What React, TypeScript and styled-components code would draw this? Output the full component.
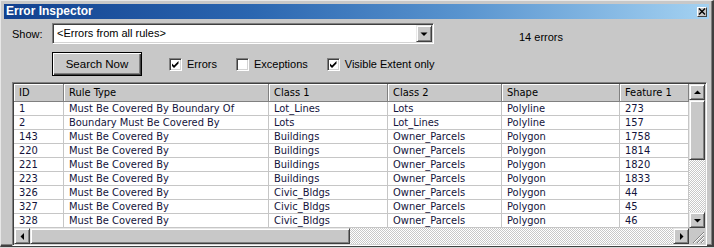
import styled, { createGlobalStyle } from 'styled-components';

type ErrorRow = {
  id: string,
  rule: string,
  class1: string,
  class2: string,
  shape: string,
  feature: string,
};

const rows: ErrorRow[] = [
  { id: '1', rule: 'Must Be Covered By Boundary Of', class1: 'Lot_Lines', class2: 'Lots', shape: 'Polyline', feature: '273' },
  { id: '2', rule: 'Boundary Must Be Covered By', class1: 'Lots', class2: 'Lot_Lines', shape: 'Polyline', feature: '157' },
  { id: '143', rule: 'Must Be Covered By', class1: 'Buildings', class2: 'Owner_Parcels', shape: 'Polygon', feature: '1758' },
  { id: '220', rule: 'Must Be Covered By', class1: 'Buildings', class2: 'Owner_Parcels', shape: 'Polygon', feature: '1814' },
  { id: '221', rule: 'Must Be Covered By', class1: 'Buildings', class2: 'Owner_Parcels', shape: 'Polygon', feature: '1820' },
  { id: '223', rule: 'Must Be Covered By', class1: 'Buildings', class2: 'Owner_Parcels', shape: 'Polygon', feature: '1833' },
  { id: '326', rule: 'Must Be Covered By', class1: 'Civic_Bldgs', class2: 'Owner_Parcels', shape: 'Polygon', feature: '44' },
  { id: '327', rule: 'Must Be Covered By', class1: 'Civic_Bldgs', class2: 'Owner_Parcels', shape: 'Polygon', feature: '45' },
  { id: '328', rule: 'Must Be Covered By', class1: 'Civic_Bldgs', class2: 'Owner_Parcels', shape: 'Polygon', feature: '46' },
];

const columns = ['ID', 'Rule Type', 'Class 1', 'Class 2', 'Shape', 'Feature 1'];
const COLUMN_TEMPLATE = '50px 205px 119px 114px 118px 1fr';

const checks = [
  { label: 'Errors', checked: true },
  { label: 'Exceptions', checked: false },
  { label: 'Visible Extent only', checked: true },
];

type Dir = 'up' | 'down' | 'left' | 'right';

const arrowPoints: Record<Dir, string> = {
  up: '4,9 11,9 7.5,5.5',
  down: '4,6 11,6 7.5,9.5',
  left: '9,4 9,11 5.5,7.5',
  right: '6,4 6,11 9.5,7.5',
};

const ArrowButton = ({ dir }: { dir: Dir }) => (
  <RaisedButton>
    <svg width="14" height="14" viewBox="0 0 14 14">
      <polygon points={arrowPoints[dir]} fill="#000" />
    </svg>
  </RaisedButton>
);

const CheckMark = () => (
  <svg width="9" height="9" viewBox="0 0 9 9">
    <path d="M1 3.5 L3 5.5 L7.5 1 L7.5 3.5 L3 8 L1 6 Z" fill="#000" />
  </svg>
);

const App = () => (
  <>
    <GlobalStyle />
    <Window>
      <TitleBar>
        <Title>Error Inspector</Title>
        <CloseButton>
          <svg width="8" height="7" viewBox="0 0 8 7">
            <path d="M1 0.5 L7 6.5 M7 0.5 L1 6.5" stroke="#000" strokeWidth="1.4" />
          </svg>
        </CloseButton>
      </TitleBar>

      <Body>
        <TopRow>
          <FieldLabel>Show:</FieldLabel>
          <Combo>
            <ComboText>&lt;Errors from all rules&gt;</ComboText>
            <DropButton>
              <svg width="14" height="14" viewBox="0 0 14 14">
                <polygon points="3.5,5.5 10.5,5.5 7,9" fill="#000" />
              </svg>
            </DropButton>
          </Combo>
          <Count>14 errors</Count>
        </TopRow>

        <ActionRow>
          <PushButton>Search Now</PushButton>
          <CheckGroup>
            {checks.map(({ label, checked }) => (
              <CheckItem key={label}>
                <CheckBox>{checked && <CheckMark />}</CheckBox>
                {label}
              </CheckItem>
            ))}
          </CheckGroup>
        </ActionRow>

        <Panel>
          <GridArea>
            <HeaderRow>
              {columns.map(col => (
                <HeaderCell key={col}>{col}</HeaderCell>
              ))}
            </HeaderRow>
            {rows.map(row => (
              <DataRow key={row.id}>
                <Cell>{row.id}</Cell>
                <Cell>{row.rule}</Cell>
                <Cell>{row.class1}</Cell>
                <Cell>{row.class2}</Cell>
                <Cell>{row.shape}</Cell>
                <Cell>{row.feature}</Cell>
              </DataRow>
            ))}
          </GridArea>

          <VScroll>
            <ArrowButton dir="up" />
            <VThumb />
            <Track />
            <ArrowButton dir="down" />
          </VScroll>

          <HScroll>
            <ArrowButton dir="left" />
            <HThumb />
            <Track />
            <ArrowButton dir="right" />
          </HScroll>

          <SizeGrip>
            <svg width="16" height="16" viewBox="0 0 16 16">
              <path d="M15 4 L4 15 M15 8 L8 15 M15 12 L12 15" stroke="#808080" strokeWidth="1" />
              <path d="M15 5 L5 15 M15 9 L9 15 M15 13 L13 15" stroke="#ffffff" strokeWidth="1" />
            </svg>
          </SizeGrip>
        </Panel>
      </Body>
    </Window>
  </>
);

export default App;

const GlobalStyle = createGlobalStyle`
  html, body {
    margin: 0;
    padding: 0;
    background: #d8d8d8;
  }
  * {
    box-sizing: border-box;
  }
`;

const Window = styled.div`
  width: 714px;
  height: 247px;
  display: flex;
  flex-direction: column;
  padding: 3px 3px 0 3px;
  background: #c8c8c8;
  border-top: 1px solid #e8e8e8;
  border-left: 1px solid #e8e8e8;
  border-right: 2px solid #404040;
  border-bottom: 2px solid #404040;
  box-shadow: inset -1px -1px #808080;
  font-family: 'Liberation Sans', Arial, sans-serif;
  font-size: 11px;
  color: #000;
`;

const TitleBar = styled.div`
  height: 15px;
  flex: none;
  display: flex;
  align-items: center;
  justify-content: space-between;
  padding: 0 2px 0 2px;
  background: linear-gradient(90deg, #12418f 0%, #2b66b0 35%, #5994cf 65%, #a4d2f2 100%);
`;

const Title = styled.span`
  color: #fff;
  font-weight: bold;
  font-size: 12px;
  line-height: 15px;
`;

const CloseButton = styled.div`
  width: 10px;
  height: 10px;
  display: flex;
  align-items: center;
  justify-content: center;
  background: #c8c8c8;
  border: 1px solid;
  border-color: #fff #404040 #404040 #fff;
`;

const Body = styled.div`
  flex: 1;
  display: flex;
  flex-direction: column;
  padding: 4px 0 0 8px;
`;

const TopRow = styled.div`
  display: flex;
  align-items: center;
  height: 21px;
`;

const FieldLabel = styled.span`
  width: 40px;
`;

const Combo = styled.div`
  width: 382px;
  height: 21px;
  display: flex;
  align-items: center;
  justify-content: space-between;
  background: #fff;
  border: 1px solid;
  border-color: #808080 #fff #fff #808080;
  box-shadow: inset 1px 1px #404040, inset -1px -1px #d4d4d4;
  padding: 1px 1px 1px 4px;
`;

const ComboText = styled.span`
  line-height: 17px;
`;

const DropButton = styled.div`
  width: 16px;
  height: 17px;
  display: flex;
  align-items: center;
  justify-content: center;
  background: #c8c8c8;
  border: 1px solid;
  border-color: #e8e8e8 #404040 #404040 #e8e8e8;
  box-shadow: inset 1px 1px #fff, inset -1px -1px #808080;
`;

const Count = styled.span`
  margin-left: 85px;
  align-self: flex-end;
  line-height: 14px;
`;

const ActionRow = styled.div`
  display: flex;
  align-items: center;
  margin: 8px 0 0 40px;
`;

const PushButton = styled.div`
  width: 90px;
  height: 24px;
  display: flex;
  align-items: center;
  justify-content: center;
  background: #c8c8c8;
  border: 1px solid #000;
  box-shadow: inset 1px 1px #fff, inset -1px -1px #404040, inset -2px -2px #808080;
  font-size: 11.5px;
`;

const CheckGroup = styled.div`
  display: flex;
  align-items: center;
  gap: 19px;
  margin-left: 27px;
`;

const CheckItem = styled.label`
  display: flex;
  align-items: center;
  gap: 5px;
`;

const CheckBox = styled.span`
  width: 13px;
  height: 13px;
  display: flex;
  align-items: center;
  justify-content: center;
  background: #fff;
  border: 1px solid;
  border-color: #808080 #fff #fff #808080;
  box-shadow: inset 1px 1px #404040, inset -1px -1px #d4d4d4;
`;

const Panel = styled.div`
  flex: 1;
  margin: 6px 2px 2px 0;
  display: grid;
  grid-template-columns: 1fr 16px;
  grid-template-rows: 1fr 16px;
  border: 1px solid;
  border-color: #808080 #fff #fff #808080;
  box-shadow: inset 1px 1px #404040, inset -1px -1px #d4d4d4;
  padding: 1px;
  overflow: hidden;
`;

const GridArea = styled.div`
  background: #fff;
  overflow: hidden;
  font-family: 'DejaVu Sans Condensed', 'DejaVu Sans', 'Liberation Sans', sans-serif;
  font-stretch: condensed;
  font-size: 11px;
  color: #14143c;
`;

const HeaderRow = styled.div`
  display: grid;
  grid-template-columns: ${COLUMN_TEMPLATE};
  height: 18px;
  background: #c8c8c8;
`;

const HeaderCell = styled.div`
  padding-left: 5px;
  line-height: 17px;
  color: #000;
  border-right: 1px solid #808080;
  border-bottom: 1px solid #808080;
  box-shadow: inset 1px 1px #fff;
  white-space: nowrap;
  overflow: hidden;
`;

const DataRow = styled.div`
  display: grid;
  grid-template-columns: ${COLUMN_TEMPLATE};
  height: 14px;
`;

const Cell = styled.div`
  padding-left: 5px;
  line-height: 14px;
  border-right: 1px solid #c6c6c6;
  border-bottom: 1px solid #c6c6c6;
  white-space: nowrap;
  overflow: hidden;
`;

const RaisedButton = styled.div`
  width: 16px;
  height: 16px;
  flex: none;
  display: flex;
  align-items: center;
  justify-content: center;
  background: #c8c8c8;
  border: 1px solid;
  border-color: #e8e8e8 #404040 #404040 #e8e8e8;
  box-shadow: inset 1px 1px #fff, inset -1px -1px #808080;
`;

const VScroll = styled.div`
  display: flex;
  flex-direction: column;
`;

const HScroll = styled.div`
  display: flex;
`;

const VThumb = styled(RaisedButton)`
  height: 60px;
`;

const HThumb = styled(RaisedButton)`
  width: 320px;
`;

const Track = styled.div`
  flex: 1;
  background: repeating-conic-gradient(#ffffff 0 25%, #c8c8c8 0 50%) 0 0 / 2px 2px;
`;

const SizeGrip = styled.div`
  background: #c8c8c8;
  display: flex;
`;
